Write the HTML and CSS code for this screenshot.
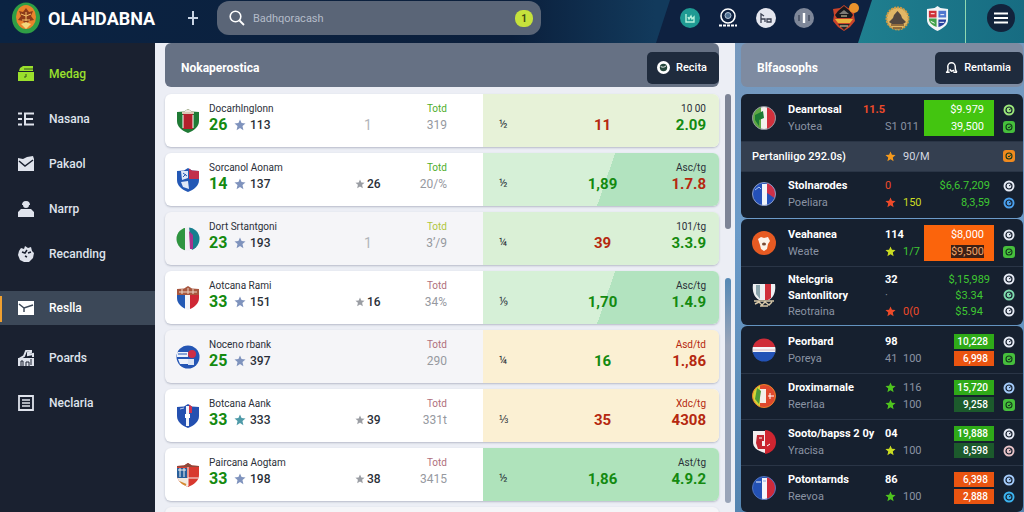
FILE: index.html
```html
<!DOCTYPE html>
<html lang="en">
<head>
    <meta charset="UTF-8">
    <meta name="viewport" content="width=device-width, initial-scale=1.0">
    <title>Olahdabna</title>
    <link rel="stylesheet" href="styles.css">
</head>
<body>
    <!-- Shared icons -->
    <svg class="sprite" aria-hidden="true">
        <symbol id="star" viewBox="0 0 12 12"><path d="M6 .5l1.6 3.6 3.9.3-3 2.6.9 4.2L6 9l-3.4 2.2.9-4.2-3-2.6 3.9-.3z"/></symbol>
        <symbol id="ring" viewBox="0 0 12 12"><circle cx="6" cy="6" r="5.5" fill="currentColor"/><circle cx="6" cy="6" r="3" fill="none" stroke="#16202f" stroke-width="1.2"/><path d="M6 6l2-1.5" stroke="#16202f"/></symbol>
        <symbol id="chip" viewBox="0 0 12 12"><rect width="12" height="12" rx="3" fill="currentColor"/><circle cx="6" cy="6" r="3" fill="none" stroke="#14391c" stroke-width="1.1"/><path d="M5 6l1 1 2-2.5" fill="none" stroke="#14391c"/></symbol>
        <clipPath id="round"><circle cx="12" cy="12" r="11.5"/></clipPath>
        <clipPath id="shield"><path d="M12 0l4 2.500 7 .5v9c0 6-5 9.500-11 12C6 21.500 1 18 1 12V3l7-.5z"/></clipPath>
    </svg>

    <header class="topbar">
        <a href="#" class="brand">
            <svg class="brand-logo" viewBox="0 0 28 32">
                <ellipse cx="14" cy="16" rx="14" ry="15.500" fill="#2f9e45"/>
                <ellipse cx="14" cy="15" rx="10" ry="12" fill="#e9842c"/>
                <path d="M7 9l4 1 3-4 3 4 4-1-2 5 3 4-5 1-3 4-3-4-5-1 3-4z" fill="#8c3a1a"/>
                <path d="M9 12l5 2 5-2M10 18h8M14 10v9" stroke="#f8c26a" fill="none"/>
                <path d="M9 22l5-2 5 2-5 5z" fill="#f3d87c"/>
            </svg>
            <span>OLAHDABNA</span>
        </a>
        <button class="add-btn" aria-label="Add">
            <svg viewBox="0 0 12 14"><path d="M6 0v14M1 7h10" stroke="currentColor" stroke-width="2"/></svg>
        </button>
        <div class="search">
            <svg class="search-icon" viewBox="0 0 16 16"><circle cx="6.500" cy="6.500" r="5.300" fill="none" stroke="currentColor" stroke-width="1.600"/><path d="M10.500 10.500L15 15" stroke="currentColor" stroke-width="1.800"/></svg>
            <input type="text" placeholder="Badhqoracash" aria-label="Search">
            <span class="search-count">1</span>
        </div>
        <div class="tools">
            <a href="#" aria-label="Stats"><svg width="20" height="20" viewBox="0 0 20 20"><circle cx="10" cy="10" r="10" fill="#1f9a93"/><path d="M6 6v8h8V9l-2 2-1-3-2 3-1-2" fill="none" stroke="#b6f1dc" stroke-width="1.400"/></svg></a>
            <a href="#" aria-label="Profile"><svg width="20" height="20" viewBox="0 0 20 20"><circle cx="10" cy="8" r="7" fill="none" stroke="#fff" stroke-width="1.600"/><circle cx="10" cy="7.500" r="3" fill="#4f7092" stroke="#b9c9da"/><path d="M1 17.500h18" stroke="#fff" stroke-width="2" stroke-dasharray="3 1"/></svg></a>
            <a href="#" aria-label="Matches"><svg width="20" height="20" viewBox="0 0 20 20"><circle cx="10" cy="10" r="10" fill="#e4e6ef"/><path d="M5 15V6l3 2M5 11h4v3M11 11h4v3h-4z" fill="none" stroke="#3a4052" stroke-width="1.300"/></svg></a>
            <a href="#" aria-label="Info"><svg width="20" height="20" viewBox="0 0 20 20"><circle cx="10" cy="10" r="10" fill="#7e8799"/><path d="M5 7v6M15 7v6" stroke="#525b6e" stroke-width="2"/><path d="M10 5v10" stroke="#fff" stroke-width="2.400"/></svg></a>
            <a href="#" class="club" aria-label="Club">
                <svg width="24" height="28" viewBox="0 0 24 28"><path d="M12 1l4 3 7 1-1 6 1 6-5 6-6 4-6-4-5-6 1-6-1-6 7-1z" fill="#c9442a"/><path d="M3 11l3-4 6-5 6 5 3 4-2 3H5z" fill="#17181e"/><path d="M7 10l5-4 5 4z" fill="#7d7a76"/><path d="M3 15h18l-3 4H6z" fill="#e9b43c"/><path d="M6 20h12l-6 6z" fill="#23242b"/><path d="M9 12h6M8 22h8" stroke="#e8dcae"/></svg>
                <span class="club-badge"></span>
            </a>
        </div>
        <div class="account">
            <a href="#" aria-label="League"><svg width="25" height="27" viewBox="0 0 25 27"><circle cx="12.500" cy="13.500" r="11" fill="#e2b765" stroke="#c99a45" stroke-width="2" stroke-dasharray="2 1"/><path d="M4 17l4-4 1-3 3.500-4L16 10l1 3 4 4-3 2H7z" fill="#54483f"/><path d="M6 20h13M8 23h9" stroke="#7a5630" stroke-width="1.500"/></svg></a>
            <a href="#" aria-label="Team"><svg width="23" height="27" viewBox="0 0 24 26"><path d="M1 3l8-1 3-2 3 2 8 1v11c0 6-5 9-11 12C6 23 1 20 1 14z" fill="#f2f4f7"/><path d="M3 5h8v7H3z" fill="#cf3038"/><path d="M3 13h8v9c-5-2-8-5-8-9z" fill="#41a04a"/><path d="M13 5h8v7h-8z" fill="#4f76cf"/><path d="M13 14h8c0 4-3 6-8 8z" fill="#263f9c"/><path d="M5 8h4M15 9h4M14 17h5M5 16l4 2" stroke="#fff"/></svg></a>
            <span class="divider"></span>
            <button class="menu-btn" aria-label="Menu"><svg viewBox="0 0 14 12"><path d="M0 1.500h14M0 6h14M0 10.500h14" stroke="#fff" stroke-width="2"/></svg></button>
        </div>
    </header>

    <div class="layout">
        <nav class="sidebar">
            <a href="#" class="highlight"><svg viewBox="0 0 16 16"><path d="M2 2l3-2h10v5H1zM0 6h16v9H0z" fill="currentColor"/><path d="M6 3h9M8 8v3H6" stroke="#33521f" fill="none"/></svg>Medag</a>
            <a href="#"><svg viewBox="0 0 16 16"><path d="M0 2.500h4M0 8h4M0 13.500h4M6 2.500h10M6 8h9M6 13.500h10M7 2v12" stroke="currentColor" stroke-width="2"/></svg>Nasana</a>
            <a href="#"><svg viewBox="0 0 16 16"><path d="M0 2l5 1 4-2 6-1 1 3v12H0z" fill="currentColor"/><path d="M1 5l6 5 8-6" stroke="#1a2130" stroke-width="1.500" fill="none"/></svg>Pakaol</a>
            <a href="#"><svg viewBox="0 0 16 16"><path d="M8 0c3 0 4 2 4 4H11c0 2-1 3-3 3S5 6 5 4H4c0-2 1-4 4-4zM0 16v-5l3-3h10l3 3v5z" fill="currentColor"/></svg>Narrp</a>
            <a href="#"><svg viewBox="0 0 16 16"><path d="M1 5l2-3 3 1 1-3 3 2 3-1 1 4 2 2-1 5-4 4H6l-4-2-2-5z" fill="currentColor"/><path d="M4 6l3 1 2-3M10 7l3-1M7 10l2 1" stroke="#1a2130" stroke-width="1.500" fill="none"/></svg>Recanding</a>
            <a href="#" class="active"><svg viewBox="0 0 16 16"><path d="M0 1h16v14H0z" fill="currentColor"/><path d="M1 4l5 4 9-3M6 8v4" stroke="#3c4858" stroke-width="1.500" fill="none"/></svg>Reslla</a>
            <a href="#"><svg viewBox="0 0 16 16"><path d="M1 9l5-3 2-5 5-1v2l-3 1v2l5-1v3" fill="none" stroke="currentColor" stroke-width="2"/><path d="M0 8h16v8H0z" fill="currentColor"/><path d="M3 16v-5h2v5M8 16v-4h3v4M13 9v6" fill="none" stroke="#1a2130"/></svg>Poards</a>
            <a href="#"><svg viewBox="0 0 16 16"><path d="M1 1h14v14H1z" fill="none" stroke="currentColor" stroke-width="1.800"/><path d="M4 5h8M4 8h8M4 11h8" stroke="currentColor" stroke-width="1.400"/></svg>Neclaria</a>
        </nav>

        <main class="matches">
            <div class="panel-head">
                <h1>Nokaperostica</h1>
                <button class="dark-btn"><svg viewBox="0 0 14 14"><circle cx="7" cy="7" r="7" fill="#fff"/><circle cx="7" cy="7" r="4" fill="#26483c"/><path d="M4 6c2 1 4 1 6-1" stroke="#fff" fill="none"/></svg>Recita</button>
            </div>

            <ul class="match-list">
                <li class="match">
                    <div class="match-info">
                        <svg class="crest" viewBox="0 0 24 24"><g clip-path="url(#shield)"><path d="M0 0h24v24H0z" fill="#1f7a35"/><path d="M6 0h12v5H6z" fill="#d9c7b4"/><path d="M7 5h10v15H7z" fill="#b3202c"/><path d="M7 6v13M17 6v13M9 2h6" stroke="#fff"/></g></svg>
                        <div class="team"><p>Docarhlnglonn</p><b>26</b><svg class="star"><use href="#star"/></svg><span>113</span></div>
                        <div class="mid faint">1</div>
                        <div class="total"><p class="lime">Totd</p><span>319</span></div>
                    </div>
                    <div class="odds pale"><span>½</span><b class="red">11</b><div><p>10 00</p><b>2.09</b></div></div>
                </li>
                <li class="match">
                    <div class="match-info">
                        <svg class="crest" viewBox="0 0 24 24"><g clip-path="url(#shield)"><path d="M0 0h24v24H0z" fill="#2358b5"/><path d="M13 0h11v11H13z" fill="#c22f4b"/><path d="M5 3h7v7l-6 2zM5 14l7-1 1 8-6-2z" fill="#dfe8f7"/><path d="M7 5l4 3M7 9l3-3" stroke="#2358b5"/></g></svg>
                        <div class="team"><p>Sorcanol Aonam</p><b>14</b><svg class="star"><use href="#star"/></svg><span>137</span></div>
                        <div class="mid"><svg class="star"><use href="#star"/></svg>26</div>
                        <div class="total"><p class="lime">Totd</p><span>20/%</span></div>
                    </div>
                    <div class="odds split"><span>½</span><b>1,89</b><div><p>Asc/tg</p><b class="red">1.7.8</b></div></div>
                </li>
                <li class="match muted">
                    <div class="match-info">
                        <svg class="crest" viewBox="0 0 24 24"><g clip-path="url(#round)"><path d="M0 0h9v24H0z" fill="#2f9440"/><path d="M9 0h5v24H9z" fill="#f1edf3"/><path d="M13 0h11v24H16z" fill="#177f8f"/><path d="M13 4l4 4v14h-3z" fill="#a7328c"/></g></svg>
                        <div class="team"><p>Dort Srtantgoni</p><b>23</b><svg class="star"><use href="#star"/></svg><span>193</span></div>
                        <div class="mid faint">1</div>
                        <div class="total"><p class="olive">Totd</p><span>3’/9</span></div>
                    </div>
                    <div class="odds light"><span>¼</span><b class="red">39</b><div><p>101/tg</p><b>3.3.9</b></div></div>
                </li>
                <li class="match">
                    <div class="match-info">
                        <svg class="crest" viewBox="0 0 24 24"><g clip-path="url(#shield)"><path d="M0 0h24v9H0z" fill="#a8573f"/><path d="M0 9h9v15H0z" fill="#2459b4"/><path d="M9 9h5v15H9z" fill="#f4f4f8"/><path d="M14 9h10v15H14z" fill="#cf2835"/><path d="M3 6h18M6 3v5M12 2v6M17 3v5" stroke="#ecd6c8"/></g></svg>
                        <div class="team"><p>Aotcana Rami</p><b>33</b><svg class="star"><use href="#star"/></svg><span>151</span></div>
                        <div class="mid"><svg class="star"><use href="#star"/></svg>16</div>
                        <div class="total"><p class="rose">Totd</p><span>34%</span></div>
                    </div>
                    <div class="odds split"><span>⅑</span><b>1,70</b><div><p>Asc/tg</p><b>1.4.9</b></div></div>
                </li>
                <li class="match muted">
                    <div class="match-info">
                        <svg class="crest" viewBox="0 0 24 24"><g clip-path="url(#round)"><path d="M0 0h24v24H0z" fill="#2455b4"/><path d="M1 7h11v5H1zM2 14h10v5H4z" fill="#eef2fa"/><path d="M12 14h6v6h-6z" fill="#dbe4f4"/><circle cx="16" cy="9" r="4" fill="#cf2f45"/><path d="M2 9h9" stroke="#2455b4"/></g></svg>
                        <div class="team"><p>Noceno rbank</p><b>25</b><svg class="star"><use href="#star"/></svg><span>397</span></div>
                        <div class="mid"></div>
                        <div class="total"><p class="rose">Totd</p><span>290</span></div>
                    </div>
                    <div class="odds sand"><span>¼</span><b>16</b><div><p class="red">Asd/td</p><b class="red">1.,86</b></div></div>
                </li>
                <li class="match">
                    <div class="match-info">
                        <svg class="crest" viewBox="0 0 24 24"><g clip-path="url(#shield)"><path d="M0 0h24v24H0z" fill="#2450b0"/><path d="M13 0h3v9h-3z" fill="#cf3350"/><path d="M10 2h3v20h-3z" fill="#f2f5fb"/><path d="M9 10h5v4H9z" fill="#fff"/><path d="M4 5l4-1" stroke="#b9cbef"/></g></svg>
                        <div class="team"><p>Botcana Aank</p><b>33</b><svg class="star teal"><use href="#star"/></svg><span>333</span></div>
                        <div class="mid"><svg class="star"><use href="#star"/></svg>39</div>
                        <div class="total"><p class="rose">Totd</p><span>331t</span></div>
                    </div>
                    <div class="odds sand"><span>⅓</span><b class="red">35</b><div><p class="red">Xdc/tg</p><b class="red">4308</b></div></div>
                </li>
                <li class="match">
                    <div class="match-info">
                        <svg class="crest" viewBox="0 0 24 24"><g clip-path="url(#shield)"><path d="M0 0h24v24H0z" fill="#d8392f"/><path d="M0 5h11v10H0z" fill="#255f9c"/><path d="M0 15h12v9H0z" fill="#f2eadf"/><path d="M2 7h8M4 5v9M8 5v9M12 15h11M12 3v20" stroke="#f4f1ee"/><path d="M3 19l7 3" stroke="#d48a2e" stroke-width="2"/><path d="M0 0h24v4H0z" fill="#8c4a3c"/></g></svg>
                        <div class="team"><p>Paircana Aogtam</p><b>33</b><svg class="star"><use href="#star"/></svg><span>198</span></div>
                        <div class="mid"><svg class="star"><use href="#star"/></svg>38</div>
                        <div class="total"><p class="rose">Totd</p><span>3415</span></div>
                    </div>
                    <div class="odds green"><span>½</span><b>1,86</b><div><p>Ast/tg</p><b>4.9.2</b></div></div>
                </li>
                <li class="match muted"></li>
            </ul>
            <div class="scroll"><span class="thumb"></span><span class="thumb blue"></span></div>
        </main>

        <aside class="standings">
            <div class="panel-head">
                <h2>Blfaosophs</h2>
                <button class="dark-btn"><svg viewBox="0 0 14 14"><path d="M2 12c2-1 1-5 1-6a4 4 0 0 1 8 0c0 2 0 5 2 6M1 12h4M9 12h4M5 9l2 2 3-1" fill="none" stroke="#fff" stroke-width="1.600"/></svg>Rentamia</button>
            </div>

            <ul class="card">
                <li class="row">
                    <svg class="crest" viewBox="0 0 24 24"><g clip-path="url(#round)"><path d="M0 0h24v24H0z" fill="#f3efec"/><path d="M0 0h9v24H0z" fill="#5ea843"/><path d="M15 0h9v24h-9z" fill="#d2303c"/><path d="M3 9l8-4 1 7-5 2v6l-4-6z" fill="#1c7a34"/></g><circle cx="12" cy="12" r="11.500" fill="none" stroke="#8b8f99"/></svg>
                    <div class="names"><p><b>Deanrtosal</b><b class="coral">11.5</b></p><p>Yuotea</p></div>
                    <div class="stats"><p></p><p>S1 011</p></div>
                    <div class="values box"><p>$9.979</p><p>39,500</p></div>
                    <div class="marks"><svg class="m-lime"><use href="#ring"/></svg><svg class="m-green"><use href="#chip"/></svg></div>
                </li>
                <li class="row band">
                    <p class="band-title">Pertanliigo 292.0s)</p>
                    <div class="stats"><p><svg class="star amber"><use href="#star"/></svg>90/M</p></div>
                    <div class="values"></div>
                    <div class="marks"><svg class="m-orange"><use href="#chip"/></svg></div>
                </li>
                <li class="row">
                    <svg class="crest" viewBox="0 0 24 24"><g clip-path="url(#round)"><path d="M0 0h24v24H0z" fill="#2450b8"/><path d="M10 2h5v22h-5z" fill="#f1f4fa"/><path d="M15 0h9v17l-9-6z" fill="#cf3048"/><path d="M3 8l4-3 2 2" stroke="#a9c2ef" fill="none"/></g><circle cx="12" cy="12" r="11.500" fill="none" stroke="#8b9bc4"/></svg>
                    <div class="names"><p><b>Stolnarodes</b></p><p>Poeliara</p></div>
                    <div class="stats"><p class="coral">0</p><p class="yellow"><svg class="star coral"><use href="#star"/></svg>150</p></div>
                    <div class="values lime"><p>$6,6.7,209</p><p>8,3,59</p></div>
                    <div class="marks"><svg><use href="#ring"/></svg><svg class="m-blue"><use href="#ring"/></svg></div>
                </li>
            </ul>

            <ul class="card">
                <li class="row">
                    <svg class="crest" viewBox="0 0 24 24"><circle cx="12" cy="12" r="12" fill="#e65a22"/><path d="M6 8l3-2 3 1 4-1 2 4-2 3-1 5-3 2-3-2-1-4z" fill="#fbf3ec"/><ellipse cx="12" cy="13" rx="2" ry="1.500" fill="#7a4a35"/></svg>
                    <div class="names"><p><b>Veahanea</b></p><p>Weate</p></div>
                    <div class="stats"><p><b>114</b></p><p class="lime"><svg class="star yellow"><use href="#star"/></svg>1/7</p></div>
                    <div class="values box orange"><p>$8,000</p><p><mark>$9,500</mark></p></div>
                    <div class="marks"><svg><use href="#ring"/></svg><svg class="m-green"><use href="#chip"/></svg></div>
                </li>
                <li class="row tall">
                    <svg class="crest" viewBox="0 0 24 24"><path d="M1 1h22c1 7-1 13-6 16H7C2 14 0 8 1 1z" fill="#eef0f2"/><path d="M13 1h6v14l-3 2h-3z" fill="#cf2f3a"/><path d="M4 2h4v14l-4-5z" fill="#8ba5ad"/><path d="M2 18h20M3 21l4-2 3 3 3-3 4 3 3-3M8 23h8" stroke="#d8c8a8" stroke-width="1.500" fill="none"/></svg>
                    <div class="names"><p><b>Ntelcgria</b></p><p><b>Santonlitory</b></p><p>Reotraina</p></div>
                    <div class="stats"><p><b>32</b></p><p>·</p><p class="coral"><svg class="star coral"><use href="#star"/></svg>0(0</p></div>
                    <div class="values lime"><p>$,15,989</p><p class="inset">$3.34</p><p class="inset">$5.94</p></div>
                    <div class="marks"><svg><use href="#ring"/></svg><svg class="m-mint"><use href="#ring"/></svg><svg><use href="#ring"/></svg></div>
                </li>
            </ul>

            <ul class="card">
                <li class="row">
                    <svg class="crest" viewBox="0 0 24 24"><g clip-path="url(#round)"><path d="M0 0h24v9H0z" fill="#cf2c38"/><path d="M0 9h24v6H0z" fill="#f5f5f8"/><path d="M0 14h24v10H0z" fill="#2352b6"/><path d="M1 12h22" stroke="#d9b6bd"/></g></svg>
                    <div class="names"><p><b>Peorbard</b></p><p>Poreya</p></div>
                    <div class="stats"><p><b>98</b></p><p><i>41</i>100</p></div>
                    <div class="values tags"><p>10,228</p><p class="orange">6,998</p></div>
                    <div class="marks"><svg><use href="#ring"/></svg><svg class="m-green"><use href="#chip"/></svg></div>
                </li>
                <li class="row">
                    <svg class="crest" viewBox="0 0 24 24"><g clip-path="url(#round)"><path d="M0 0h24v24H0z" fill="#e0492d"/><path d="M0 0h8v24H0z" fill="#d3d536"/><path d="M8 5h6v14H8z" fill="#f4f0ea"/><path d="M5 4l4 3-2 13-4-5z" fill="#4d9b3a"/><path d="M16 12h6M18 9v6" stroke="#fff"/></g><circle cx="12" cy="12" r="11.500" fill="none" stroke="#e8822b"/></svg>
                    <div class="names"><p><b>Droximarnale</b></p><p>Reerlaa</p></div>
                    <div class="stats"><p><svg class="star grass"><use href="#star"/></svg>116</p><p><svg class="star grass"><use href="#star"/></svg>100</p></div>
                    <div class="values tags"><p>15,720</p><p class="deep">9,258</p></div>
                    <div class="marks"><svg class="m-sky"><use href="#ring"/></svg><svg class="m-green"><use href="#chip"/></svg></div>
                </li>
                <li class="row">
                    <svg class="crest" viewBox="0 0 24 24"><path d="M1 1h12v22C5 21 1 17 1 12z" fill="#f4eeee"/><path d="M13 0c6 0 11 5 11 12s-5 11-11 12z" fill="#cf2530"/><path d="M5 5h7v6h-2v5h3v3H6l-2-6z" fill="#c22530"/><path d="M7 8h3M15 16l3-2" stroke="#fff"/></svg>
                    <div class="names"><p><b>Sooto/bapss 2 0y</b></p><p>Yracisa</p></div>
                    <div class="stats"><p><b>04</b></p><p><svg class="star yellow"><use href="#star"/></svg>100</p></div>
                    <div class="values tags"><p>19,888</p><p class="deep">8,598</p></div>
                    <div class="marks"><svg><use href="#ring"/></svg><svg class="m-pink"><use href="#ring"/></svg></div>
                </li>
                <li class="row">
                    <svg class="crest" viewBox="0 0 24 24"><g clip-path="url(#round)"><path d="M0 0h24v24H0z" fill="#2351b4"/><path d="M10 2h5v22h-5z" fill="#f4f5fa"/><path d="M15 0h9v24h-9z" fill="#cf2a3a"/><path d="M4 6h5M11 5h3" stroke="#a9bfe8" stroke-width="1.500"/></g><circle cx="12" cy="12" r="11.500" fill="none" stroke="#5373b9"/></svg>
                    <div class="names"><p><b>Potontarnds</b></p><p>Reevoa</p></div>
                    <div class="stats"><p><b>86</b></p><p><svg class="star grass"><use href="#star"/></svg>100</p></div>
                    <div class="values tags"><p class="orange">6,398</p><p class="orange">2,888</p></div>
                    <div class="marks"><svg class="m-sky"><use href="#ring"/></svg><svg class="m-cyan"><use href="#ring"/></svg></div>
                </li>
            </ul>
        </aside>
    </div>
</body>
</html>
```
FILE: styles.css
```css
/* Global styles */
:root {
    --navy: #0b1f3c;
    --dark: #1a2130;
    --card-dark: #16202f;
    --text-color: #2a2f38;
    --green: #148a10;
    --red: #b5280f;
}

* {
    box-sizing: border-box;
}

body {
    font-family: Roboto, 'Liberation Sans', sans-serif;
    color: var(--text-color);
    margin: 0;
    height: 100vh;
    display: flex;
    flex-direction: column;
    overflow: hidden;
}

h1, h2, p, ul {
    margin: 0;
    padding: 0;
}

ul {
    list-style: none;
}

a {
    color: inherit;
    text-decoration: none;
}

button {
    border: 0;
    padding: 0;
    background: none;
    color: inherit;
    font: inherit;
    cursor: pointer;
}

svg {
    display: block;
    flex: none;
}

.sprite {
    position: absolute;
    width: 0;
    height: 0;
}

/* Top bar */
.topbar {
    height: 43px;
    flex: none;
    display: flex;
    align-items: center;
    color: #fff;
    background: linear-gradient(90deg, #0b2342, var(--navy) 50%, #123a5c 64%);
}

.topbar > * {
    margin-bottom: 7px;
}

.brand {
    width: 187px;
    padding-left: 12px;
    display: flex;
    align-items: center;
    gap: 8px;
    font-size: 18px;
    font-weight: 700;
}

.brand-logo {
    width: 28px;
    height: 32px;
}

.add-btn {
    width: 30px;
    color: #c9d4e4;
}

.add-btn svg {
    width: 12px;
    height: 14px;
}

.search {
    flex: 1;
    height: 34px;
    margin-right: 115px;
    padding: 0 8px 0 12px;
    display: flex;
    align-items: center;
    gap: 6px;
    background: #5a6577;
    border-radius: 12px;
}

.search-icon {
    width: 16px;
    height: 16px;
}

.search input {
    flex: 1;
    min-width: 0;
    border: 0;
    outline: 0;
    background: none;
    color: #fff;
    font: 11px Roboto, 'Liberation Sans', sans-serif;
}

.search input::placeholder {
    color: #b4bcc9;
}

.search-count {
    width: 18px;
    height: 17px;
    line-height: 17px;
    border-radius: 8px;
    background: #c6e23c;
    color: #3c4a12;
    font-size: 10px;
    font-weight: 700;
    text-align: center;
}

.topbar .tools,
.topbar .account {
    height: 43px;
    margin-bottom: 0;
    padding-bottom: 7px;
    display: flex;
    align-items: center;
}

.tools {
    width: 216px;
    padding-left: 24px;
    gap: 18px;
    background: #0e2140;
    clip-path: polygon(14px 0, 100% 0, 100% 100%, 0 100%);
}

.club {
    position: relative;
}

.club-badge {
    position: absolute;
    top: -1px;
    right: -3px;
    width: 10px;
    height: 10px;
    border-radius: 50%;
    background: #e8922c;
}

.account {
    width: 166px;
    margin-left: -14px;
    padding-left: 27px;
    gap: 16px;
    background: linear-gradient(90deg, #1f7f8f, #176c82);
    clip-path: polygon(14px 0, 100% 0, 100% 100%, 0 100%);
}

.divider {
    width: 1px;
    height: 43px;
    margin-bottom: -7px;
    background: #8fd8b0;
}

.menu-btn {
    width: 28px;
    height: 28px;
    margin-left: 5px;
    border-radius: 50%;
    background: #12233c;
    display: grid;
    place-items: center;
}

.menu-btn svg {
    width: 14px;
    height: 12px;
}

/* Page layout */
.layout {
    flex: 1;
    min-height: 0;
    display: grid;
    grid-template-columns: 155px 1fr 289px;
    grid-template-rows: 100%;
}

/* Sidebar */
.sidebar {
    padding-top: 8px;
    background: var(--dark);
    color: #dfe3ec;
    font-size: 12px;
    font-weight: 500;
}

.sidebar a {
    position: relative;
    height: 45px;
    padding-left: 18px;
    display: flex;
    align-items: center;
    gap: 15px;
}

.sidebar svg {
    width: 16px;
    height: 16px;
}

.sidebar .highlight {
    color: #9be02c;
}

.sidebar .active {
    height: 34px;
    margin: 15px 0 10px;
    background: #3c4858;
    color: #fff;
}

.sidebar .active::before {
    content: "";
    position: absolute;
    left: 0;
    top: 5px;
    bottom: 3px;
    width: 2px;
    background: #f0a030;
}

/* Panel headers */
.panel-head {
    height: 44px;
    margin-bottom: 7px;
    padding: 5px 0 0 16px;
    display: flex;
    align-items: center;
    justify-content: space-between;
    background: #667184;
    color: #fff;
    border-radius: 6px;
}

.panel-head h1,
.panel-head h2 {
    font-size: 12px;
    font-weight: 700;
}

.dark-btn {
    height: 32px;
    padding: 0 12px 0 10px;
    display: flex;
    align-items: center;
    gap: 6px;
    background: #1f2b3d;
    border-radius: 5px;
    font-size: 11px;
    font-weight: 500;
}

.dark-btn svg {
    width: 13px;
    height: 13px;
}

/* Match list */
.matches {
    padding: 0 4px 0 10px;
    display: grid;
    grid-template-columns: 1fr 6px;
    grid-template-rows: auto 1fr;
    column-gap: 6px;
    background: #eceef5;
    overflow: hidden;
}

.match-list {
    grid-column: 1;
    grid-row: 2;
    min-height: 0;
}

.match {
    height: 53px;
    margin-bottom: 6px;
    display: grid;
    grid-template-columns: 318fr 236fr;
    background: #fff;
    border-radius: 6px;
    box-shadow: 0 1px 2px rgba(60, 70, 100, 0.3);
    overflow: hidden;
}

.match.muted {
    background: #f5f5f8;
}

.match p {
    font-size: 10px;
    line-height: 14px;
}

.match-info {
    padding: 8px 36px 0 11px;
    display: grid;
    grid-template-columns: 22px 1fr 26px 66px;
}

.crest {
    width: 24px;
    height: 24px;
}

.match .crest {
    margin-top: 7px;
}

.team {
    margin-left: 11px;
    display: flex;
    flex-wrap: wrap;
    align-items: center;
    align-content: flex-start;
    font-size: 12px;
    font-weight: 500;
    line-height: 18px;
}

.team p {
    width: 100%;
    font-weight: 400;
}

.team b {
    width: 25px;
    font-size: 16px;
    color: var(--green);
}

.star {
    width: 12px;
    height: 12px;
    fill: #7f93bd;
}

.team .star {
    margin-right: 4px;
}

.star.teal {
    fill: #4f9aa8;
}

.mid {
    height: 18px;
    margin-top: 14px;
    display: flex;
    align-items: center;
    gap: 2px;
    font-size: 12px;
    font-weight: 500;
}

.mid .star {
    width: 10px;
    height: 10px;
    fill: #9a9da3;
}

.mid.faint {
    justify-content: center;
    color: #b2b5ba;
    font-size: 14px;
    font-weight: 400;
}

.total {
    text-align: right;
    font-size: 12px;
    line-height: 18px;
    color: #96999f;
}

.match .lime { color: #4fae2c; }
.match .olive { color: #b0c63c; }
.match .rose { color: #b0707c; }

.odds {
    padding: 8px 13px 0 16px;
    display: grid;
    grid-template-columns: 1fr 1fr 1fr;
    line-height: 18px;
    text-align: center;
}

.odds > span,
.odds > b {
    margin-top: 14px;
}

.odds > span {
    font-size: 11px;
    text-align: left;
}

.odds b {
    font-size: 15px;
    color: var(--green);
}

.odds div {
    text-align: right;
}

.match .odds .red {
    color: var(--red);
}

.odds.pale { background: #e7f2d8; }
.odds.light { background: #daf0d6; }
.odds.sand { background: #fbf0d3; }
.odds.green { background: #afe3bb; }
.odds.split { background: linear-gradient(109deg, #d6f0d7 52%, #b2e3bf 52%); }

/* Scrollbar */
.scroll {
    grid-column: 2;
    grid-row: 2;
    display: flex;
    flex-direction: column;
    justify-content: space-between;
    padding-bottom: 9px;
}

.thumb {
    height: 33%;
    border-radius: 3px;
    background: #7d8496;
}

.thumb.blue {
    height: 55%;
    background: linear-gradient(#5689b5, #99a4b8 30%);
}

/* Standings */
.standings {
    padding: 0 1px 0 6px;
    background: linear-gradient(#7698bd, #6b9bc9 40%, #5585b0);
    color: #fff;
    font-size: 11px;
    overflow: hidden;
}

.standings .panel-head {
    background: #7e8ba1;
}

.card {
    margin-bottom: 1px;
    padding: 1px 0;
    background: var(--card-dark);
    border-radius: 6px;
    overflow: hidden;
}

.row {
    padding: 6px 8px 6px 11px;
    display: grid;
    grid-template-columns: 24px 1fr 39px 70px 21px;
    align-items: center;
    line-height: 17px;
    color: #8a93a3;
}

.row + .row {
    box-shadow: inset 0 1px #2a3546;
}

.row b {
    color: #fff;
    font-weight: 700;
}

.row p {
    height: 17px;
    display: flex;
    align-items: center;
    white-space: nowrap;
}

.row.tall {
    padding-top: 5px;
    padding-bottom: 5px;
}

.row.tall p {
    height: 16px;
}

.row.band {
    height: 30px;
    grid-template-columns: 1fr 39px 70px 21px;
    background: #343f50;
    color: #d3d8e0;
}

.band-title {
    font-weight: 500;
    color: #fff;
}

.names {
    margin-left: 12px;
}

.names p {
    justify-content: space-between;
}

.stats .star {
    width: 11px;
    height: 11px;
    margin-right: 7px;
}

.stats i {
    width: 18px;
    font-style: normal;
}

.values p {
    justify-content: flex-end;
    padding-right: 4px;
}

.values .inset {
    padding-right: 11px;
}

.values.box {
    margin: -1px 0;
    padding: 1px 6px 1px 0;
    background: #43c510;
    color: #fff;
}

.values.box.orange {
    background: #fb640c;
}

.values mark {
    background: #3d2015;
    color: #f0a468;
    line-height: 13px;
}

.values.tags {
    display: flex;
    flex-direction: column;
    align-items: flex-end;
    gap: 2px;
}

.values.tags p {
    width: 40px;
    height: 15px;
    padding-right: 6px;
    background: #2faa18;
    color: #fff;
    font-size: 10px;
    font-weight: 500;
}

.values.tags .orange { background: #ea5410; }
.values.tags .deep { background: #1c5a2c; }

.marks {
    display: flex;
    flex-direction: column;
    align-items: flex-end;
    gap: 5px;
    color: #e6ebf5;
}

.marks svg {
    width: 12px;
    height: 12px;
}

.tall .marks {
    gap: 4px;
}

.row .lime { color: #3fc832; }
.row .coral { color: #ee4a2a; fill: #ee4a2a; }
.row .yellow { color: #c9dc22; fill: #c9dc22; }
.row .amber { fill: #f59a1c; }
.row .grass { fill: #4fc41e; }

.m-lime { color: #9be67a; }
.m-green { color: #46bf3c; }
.m-orange { color: #f08a1e; }
.m-blue { color: #4aa0ee; }
.m-mint { color: #7fdcae; }
.m-sky { color: #a5ccfb; }
.m-cyan { color: #3cb4f0; }
.m-pink { color: #e8c4c8; }
```
